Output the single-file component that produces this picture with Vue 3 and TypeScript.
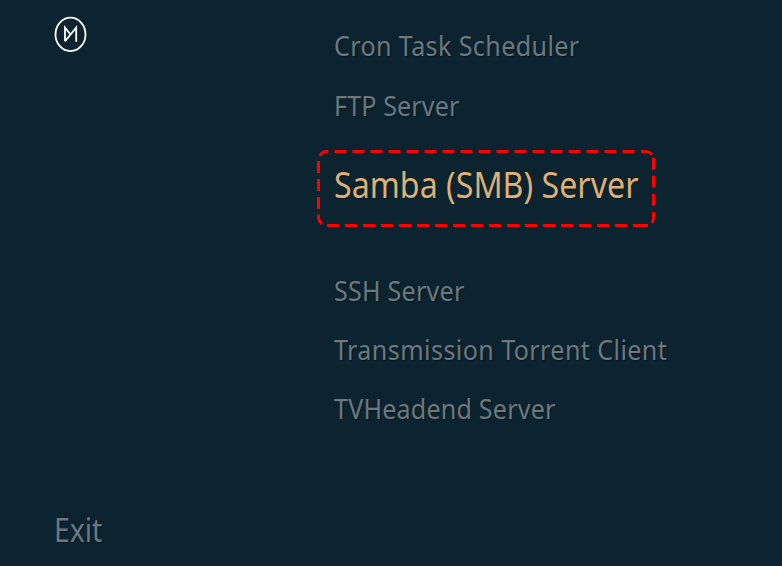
<script setup lang="ts">
interface Service { name: string; tracking: number; active?: boolean }
const services: Service[] = [
  { name: 'Cron Task Scheduler', tracking: 0.4 },
  { name: 'FTP Server', tracking: 0.12 },
  { name: 'Samba (SMB) Server', tracking: 0, active: true },
  { name: 'SSH Server', tracking: 0.24 },
  { name: 'Transmission Torrent Client', tracking: 0.43 },
  { name: 'TVHeadend Server', tracking: 0.2 },
]
</script>

<template>
  <main class="screen">
    <aside class="side">
      <svg class="logo" viewBox="0 0 34 38" fill="none" stroke="#fff">
        <ellipse cx="17.5" cy="19.4" rx="15" ry="16.7" stroke-width="1.8" />
        <path d="M12 26.3V12.6L17.5 19.5M12 26.3L23.2 12.6V26.7" stroke-width="1.8" />
      </svg>
      <button class="exit"><span class="label">Exit</span></button>
    </aside>
    <ul class="menu">
      <li v-for="s in services" :key="s.name" class="item" :class="{ active: s.active }">
        <svg v-if="s.active" class="outline" viewBox="0 0 338 77">
          <g class="dashes">
            <path d="M17.5 1.5H319" />
            <path d="M336.5 7.7V56" />
            <path d="M10 75.5H331" />
            <path d="M1.5 11V59" />
          </g>
          <path d="M2.8 5.8Q5 1.5 10 1.5H11.5M324 1.5H328Q332 1.5 335 4.3M336.5 62V67Q336.5 70.5 335 73M1.5 64.5V67Q1.5 71 5 74M328 75.5H331" />
        </svg>
        <span class="label" :style="{ letterSpacing: `${s.tracking}px` }">{{ s.name }}</span>
      </li>
    </ul>
  </main>
</template>

<style>
body { margin: 0; background: #0c2430; }
</style>
<style scoped>
.screen { box-sizing: border-box; width: 782px; height: 566px; overflow: hidden; display: flex; background: #0c2430; color: #6c787d; font-family: "Noto Sans", sans-serif; text-shadow: 1px 1px 1px #081a23; }
.side { box-sizing: border-box; width: 334px; padding: 15px 0 6px 53px; display: flex; flex-direction: column; justify-content: space-between; align-items: flex-start; }
.logo { width: 34px; height: 38px; }
.exit { padding: 0 0 0 1px; border: 0; background: none; color: inherit; font: 33px/60px "Noto Sans", sans-serif; text-shadow: inherit; }
.label { display: inline-block; transform-origin: left center; white-space: nowrap; }
.exit .label { transform: scaleX(.86); }
.menu { margin: 0; padding: 16.35px 0 0; list-style: none; }
.item { position: relative; height: 59.2px; font-size: 27px; line-height: 60px; }
.item .label { transform: scaleX(.93); }
.item.active { height: 126.25px; font-size: 37px; line-height: 97px; color: #deb076; }
.item.active .label { transform: scaleX(.87); }
.outline { position: absolute; left: -17px; top: 15.25px; width: 338px; height: 77px; fill: none; stroke: #f00; stroke-width: 3; }
.dashes { stroke-dasharray: 12 6; }
</style>
